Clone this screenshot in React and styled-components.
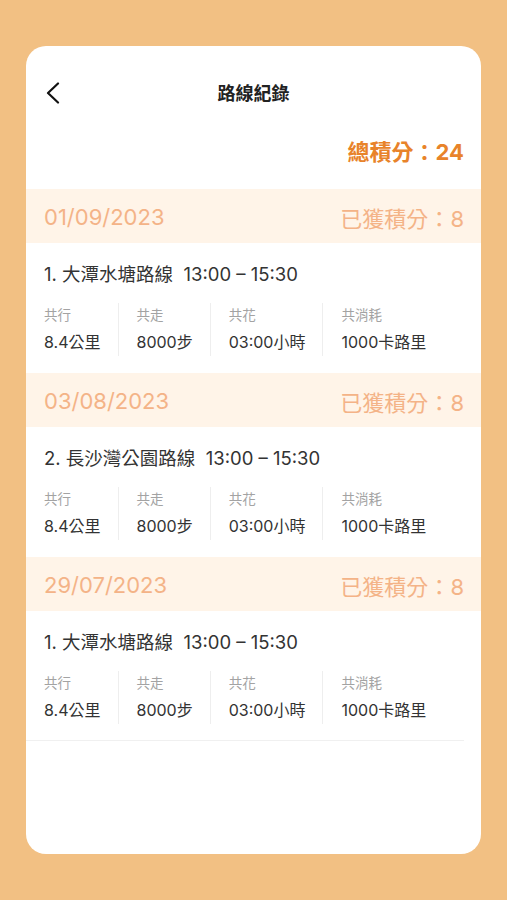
import React from "react";
import styled, { createGlobalStyle } from "styled-components";

const GlobalStyle = createGlobalStyle`
  html, body {
    margin: 0;
    padding: 0;
    background: #f2c083;
  }
  body {
    font-family: Inter, "Noto Sans CJK TC", "Noto Sans", sans-serif;
  }
`;

const Page = styled.div`
  width: 507px;
  height: 900px;
  box-sizing: border-box;
  padding: 46px 26px;
  background: #f2c083;
`;

const Card = styled.div`
  height: 808px;
  background: #ffffff;
  border-radius: 20px;
  overflow: hidden;
`;

const Header = styled.div`
  position: relative;
  height: 92px;
  display: flex;
  align-items: center;
  justify-content: center;
`;

const BackButton = styled.button`
  position: absolute;
  left: 20px;
  top: 36px;
  border: none;
  background: none;
  padding: 0;
  display: flex;
`;

const Title = styled.h1`
  margin: 0;
  font-size: 18px;
  font-weight: 700;
  color: #222;
`;

const TotalRow = styled.div`
  display: flex;
  justify-content: flex-end;
  padding: 0 17px 0 0;
  height: 51px;
  align-items: flex-start;
`;

const Total = styled.span`
  font-size: 22px;
  font-weight: 700;
  color: #e8832a;
  line-height: 28px;
`;

const DateBand = styled.div`
  height: 54px;
  display: flex;
  align-items: center;
  justify-content: space-between;
  padding: 2px 17px 0 18px;
  box-sizing: border-box;
  background: #fff4e8;
  color: #f4b387;
  font-size: 22px;
`;

const Entry = styled.div`
  margin-right: 17px;
  padding: 18px 0 0 18px;
  height: 130px;
  box-sizing: border-box;
  border-bottom: ${(p) => (p.$last ? "1px solid #f0f0f0" : "none")};
`;

const RouteName = styled.div`
  font-size: 18.5px;
  color: #333;
  line-height: 26px;
  white-space: pre;
`;

const Stats = styled.div`
  display: flex;
  margin-top: 16px;
`;

const Stat = styled.div`
  padding: 3px 17px 3px 18px;
  border-left: ${(p) => (p.$first ? "none" : "1px solid #eeeeee")};
  padding-left: ${(p) => (p.$first ? "0" : "18px")};
  display: flex;
  flex-direction: column;
  gap: 7px;
`;

const Label = styled.span`
  font-size: 13.5px;
  color: #a3a3a3;
  line-height: 18px;
`;

const Value = styled.span`
  font-size: 16px;
  color: #333;
  line-height: 22px;
`;

const records = [
  { date: "01/09/2023", points: 8, name: "1. 大潭水塘路線" },
  { date: "03/08/2023", points: 8, name: "2. 長沙灣公園路線" },
  { date: "29/07/2023", points: 8, name: "1. 大潭水塘路線" },
];

const stats = [
  ["共行", "8.4公里"],
  ["共走", "8000步"],
  ["共花", "03:00小時"],
  ["共消耗", "1000卡路里"],
];

function Chevron() {
  return (
    <svg width="14" height="22" viewBox="0 0 14 22" fill="none">
      <path d="M12 1.5 L2 11 L12 20.5" stroke="#111" strokeWidth="2.2" strokeLinecap="round" strokeLinejoin="round" />
    </svg>
  );
}

export default function App() {
  return (
    <Page>
      <GlobalStyle />
      <Card>
        <Header>
          <BackButton>
            <Chevron />
          </BackButton>
          <Title>路線紀錄</Title>
        </Header>
        <TotalRow>
          <Total>總積分：24</Total>
        </TotalRow>
        {records.map((r, i) => (
          <div key={i}>
            <DateBand>
              <span>{r.date}</span>
              <span>已獲積分：{r.points}</span>
            </DateBand>
            <Entry $last={i === records.length - 1}>
              <RouteName>{r.name}  13:00 – 15:30</RouteName>
              <Stats>
                {stats.map(([label, value], j) => (
                  <Stat key={label} $first={j === 0}>
                    <Label>{label}</Label>
                    <Value>{value}</Value>
                  </Stat>
                ))}
              </Stats>
            </Entry>
          </div>
        ))}
      </Card>
    </Page>
  );
}
